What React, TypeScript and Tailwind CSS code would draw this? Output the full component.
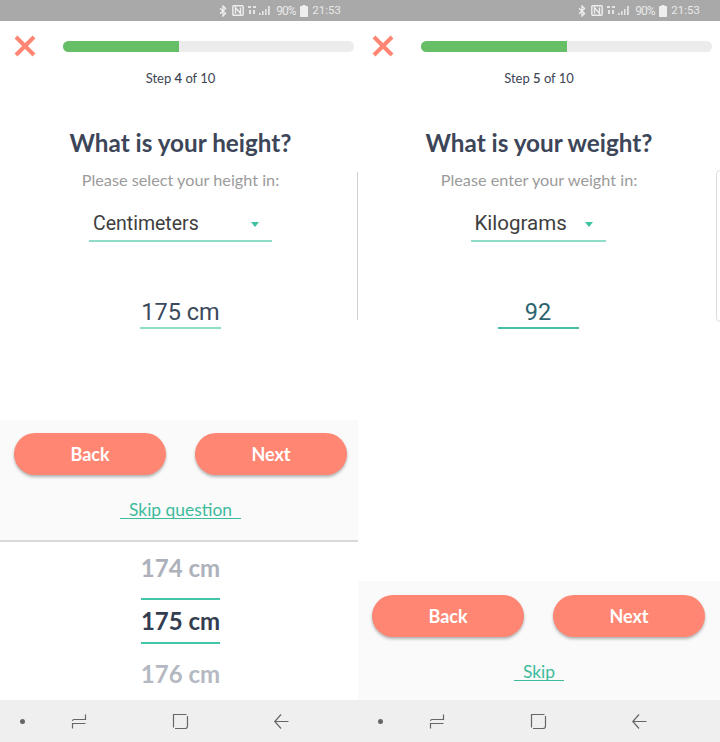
import React from "react";

const lato = "font-['Lato',sans-serif]";
const roboto = "font-['Roboto',sans-serif]";

function StatusBar({ pad }: { pad: string }) {
  return (
    <div className={`h-[21px] bg-[#a9a9a9] flex items-center justify-end ${pad} text-[#e8e8e8] ${roboto} text-[12px] leading-none`}>
      <svg width="8" height="12" viewBox="0 0 8 12" fill="none" stroke="#eeeeee" strokeWidth="1.3"><path d="M1 3.200 6.600 8.400 4 11V1l2.600 2.600L1 8.800" /></svg>
      <svg className="ml-[5px]" width="12" height="11" viewBox="0 0 12 11" fill="none" stroke="#eeeeee" strokeWidth="1.4"><rect x="0.8" y="0.8" width="10.4" height="9.4" rx="1" /><path d="M3.500 8.500V2.600L8.500 8.500V2.600" /></svg>
      <svg className="ml-[4px]" width="24" height="11" viewBox="0 0 24 11" fill="#e4e4e4"><rect x="0" y="1" width="3" height="2" /><rect x="5" y="1" width="3" height="2" /><rect x="1" y="5" width="2" height="4" /><rect x="5" y="5" width="2" height="4" /><path d="M11 10h1.600V8H11zM14 10h1.600V6H14zM17 10h1.600V4H17zM20 10h1.800V1H20z" /></svg>
      <span className="ml-[4px] w-[20px] tracking-[-1px] whitespace-nowrap">90%</span>
      <svg className="ml-[4px]" width="8" height="12" viewBox="0 0 8 12" fill="#eeeeee"><path d="M2.500 0h3v1H7.300a.7.7 0 0 1 .7.700V11.300a.7.700 0 0 1-.7.700H.7a.7.700 0 0 1-.7-.700V1.700A.7.700 0 0 1 .7 1H2.500z" /></svg>
      <span className="ml-[4px] text-[11.5px]">21:53</span>
    </div>
  );
}

function Header({ step, pct }: { step: number; pct: string }) {
  return (
    <>
      <div className="flex items-center pt-[14px] pl-[14px] w-[360px]">
        <svg width="22" height="22" viewBox="0 0 22 22" fill="none" stroke="#ff8672" strokeWidth="4"><path d="M2 2 20 20M20 2 2 20" /></svg>
        <div className="ml-[27px] h-[11px] w-[291px] rounded-full bg-[#ececec] overflow-hidden">
          <div className={`h-full bg-[#66bf66] ${pct}`} />
        </div>
      </div>
      <p className={`mt-[12px] text-center text-[13px] leading-[18px] text-[#3d4555] ${lato}`}>
        Step <span className="font-semibold">{step}</span> of 10
      </p>
    </>
  );
}

function Question({ title, sub }: { title: string; sub: string }) {
  return (
    <>
      <h1 className={`mt-[38px] text-center text-[24.25px] leading-[36px] font-bold text-[#3c4658] ${lato}`}>{title}</h1>
      <p className={`mt-[9px] text-center text-[16.25px] leading-[20px] text-[#9b9b9b] ${lato}`}>{sub}</p>
    </>
  );
}

function Select({ label, width, size, lift }: { label: string; width: string; size: string; lift: string }) {
  return (
    <div className={`mx-auto mt-[21px] h-[31px] ${width} border-b-2 border-[#8fdcc8] flex items-center justify-between pl-[4px] pr-[13px] ${roboto} ${size} leading-[24px] text-[#3e3e3e]`}>
      <span className={lift}>{label}</span>
      <div className="mt-[-3px] w-0 h-0 border-x-[4.5px] border-x-transparent border-t-[5px] border-t-[#3fc2a2]" />
    </div>
  );
}

function Buttons() {
  const cls = `w-[152px] h-[42px] rounded-full bg-[#ff8672] text-white text-[18px] font-bold ${lato} shadow-[0_2px_3px_rgba(90,90,90,0.45)] flex items-center justify-center`;
  return (
    <div className="flex pl-[14px] w-[360px] gap-[29px]">
      <button className={cls}>Back</button>
      <button className={cls}>Next</button>
    </div>
  );
}

function Nav() {
  return (
    <div className="h-[42px] bg-[#efefef] w-[362px] flex items-center">
      <div className="ml-[20px] w-[5px] h-[5px] rounded-full bg-[#666666]" />
      <svg className="ml-[46px]" width="17" height="17" viewBox="0 0 17 17" fill="none" stroke="#666666" strokeWidth="1.2"><path d="M14.500 1.500V6.500H3Q1.500 6.500 1.500 8M1.500 15.500V10.500H14.500" /></svg>
      <svg className="ml-[84px]" width="17" height="17" viewBox="0 0 17 17" fill="none" stroke="#666666" strokeWidth="1.2"><path d="M14.500 1.500H1.500V14.500M3 15.500H13Q15.500 15.500 15.500 13V3" /></svg>
      <svg className="ml-[84px]" width="17" height="17" viewBox="0 0 17 17" fill="none" stroke="#666666" strokeWidth="1.2"><path d="M15.500 8.500H2M8 1.500 1.800 8.500 8 15.500" /></svg>
    </div>
  );
}

function Skip({ text, px }: { text: string; px: string }) {
  return (
    <div className="flex justify-center">
      <span className={`relative ${px} text-[17.4px] leading-[22px] text-[#3dbc9c] ${lato}`}>
        {text}
        <span className="absolute left-0 right-0 bottom-[2px] h-px bg-[#3dbc9c]" />
      </span>
    </div>
  );
}

export default function App() {
  return (
    <div className="flex w-[720px] h-[742px] bg-white overflow-hidden">
      {/* Left phone */}
      <div className="w-[358px] h-[742px] overflow-hidden flex flex-col">
        <StatusBar pad="pr-[17px]" />
        <div className="w-[361px] flex-1 flex flex-col">
          <Header step={4} pct="w-[116px]" />
          <Question title="What is your height?" sub="Please select your height in:" />
          <Select label="Centimeters" width="w-[183px]" size="text-[19.5px]" lift="mt-[-3px]" />
          <div className={`mx-auto mt-[52px] w-[81px] h-[35px] pt-[2px] border-b-2 border-[#8fdcc8] flex items-center justify-center whitespace-nowrap ${roboto} text-[23.5px] leading-[28px] text-[#3b4a5c]`}>
            175 cm
          </div>
          <div className="flex-1" />
          <div className="h-[122px] pt-[13px] bg-[#fafafa] border-b-2 border-[#d9d9d9]">
            <Buttons />
            <div className="mt-[24px]">
              <Skip text="Skip question" px="px-[9px]" />
            </div>
          </div>
          <div className={`h-[158px] flex flex-col items-center text-[24px] font-bold ${lato}`}>
            <div className="mt-[8px] h-[36px] flex items-center text-[#adb1bb]">174 cm</div>
            <div className="mt-[12px] w-[79px] h-[46px] border-y-2 border-[#45c5a8] flex items-center justify-center whitespace-nowrap text-[#343d50] pb-[1px]">175 cm</div>
            <div className="mt-[12px] h-[36px] flex items-center text-[#b4b8c1]">176 cm</div>
          </div>
        </div>
        <Nav />
      </div>

      {/* Right phone */}
      <div className="relative w-[362px] h-[742px] flex flex-col">
        <div className="absolute left-[-1px] top-[172px] w-px h-[148px] bg-[#cfcfcf]" />
        <div className="absolute right-[-4px] top-[170px] w-[8px] h-[152px] rounded-[5px] border border-[#dddddd]" />
        <StatusBar pad="pr-[20px]" />
        <div className="flex-1 flex flex-col">
          <Header step={5} pct="w-[146px]" />
          <Question title="What is your weight?" sub="Please enter your weight in:" />
          <div className="w-[360px]">
            <Select label="Kilograms" width="w-[135px]" size="text-[20.5px]" lift="mt-[-5px]" />
            <div className={`mx-auto mt-[52px] w-[81px] h-[35px] pt-[2px] border-b-2 border-[#45c0a4] flex items-center justify-center ${roboto} text-[23.5px] leading-[28px] text-[#2c6470]`}>
              92
            </div>
          </div>
          <div className="flex-1" />
          <div className="h-[119px] pt-[14px] bg-[#fafafa]">
            <Buttons />
            <div className="mt-[24px]">
              <Skip text="Skip" px="px-[9px]" />
            </div>
          </div>
        </div>
        <Nav />
      </div>
    </div>
  );
}
